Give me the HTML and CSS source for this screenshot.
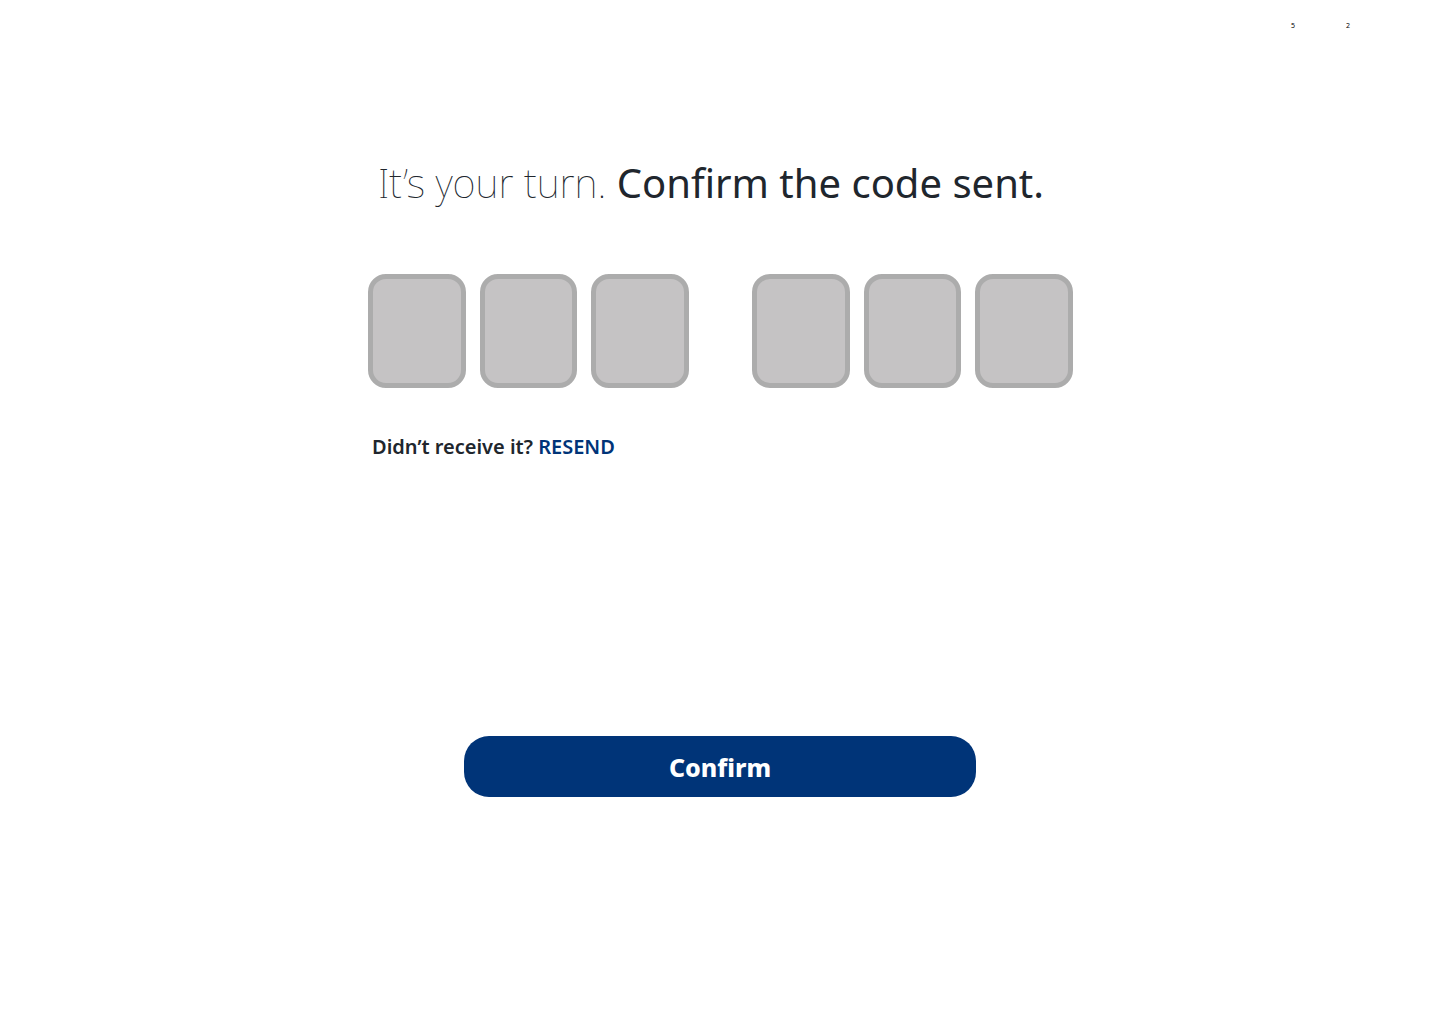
FILE: index.html
```html
<!DOCTYPE html>
<html lang="en">
<head>
<meta charset="utf-8">
<meta name="viewport" content="width=device-width, initial-scale=1">
<title>Confirm the code</title>
<link rel="stylesheet" href="styles.css">
</head>
<body>
<header class="steps"><span>5</span><span>2</span></header>
<main class="page">
<h1 class="title"><span class="title-light">It’s your turn.</span> Confirm the code sent.</h1>
<form class="form">
<div class="code">
<div class="group">
<input class="digit" type="text" inputmode="numeric" maxlength="1" aria-label="Digit 1">
<input class="digit" type="text" inputmode="numeric" maxlength="1" aria-label="Digit 2">
<input class="digit" type="text" inputmode="numeric" maxlength="1" aria-label="Digit 3">
</div>
<div class="group">
<input class="digit" type="text" inputmode="numeric" maxlength="1" aria-label="Digit 4">
<input class="digit" type="text" inputmode="numeric" maxlength="1" aria-label="Digit 5">
<input class="digit" type="text" inputmode="numeric" maxlength="1" aria-label="Digit 6">
</div>
</div>
<p class="resend">Didn’t receive it? <a class="resend-link" href="#resend">RESEND</a></p>
<button class="confirm" type="submit">Confirm</button>
</form>
</main>
</body>
</html>
```
FILE: styles.css
```css
* {
  box-sizing: border-box;
}

body {
  margin: 0;
  background: #fff;
  color: #20262d;
  font-family: "Noto Sans", sans-serif;
}

.steps {
  display: flex;
  justify-content: flex-end;
  gap: 51px;
  padding: 22px 90px 0;
  color: #000;
  font-size: 7px;
  line-height: 8px;
}

.page {
  max-width: 706px;
  margin: 0 auto;
  padding-top: 125px;
}

.title {
  margin: 0;
  padding-left: 11px;
  font-size: 40px;
  font-weight: 400;
  line-height: 56px;
}

.title-light {
  font-weight: 100;
}

.form {
  display: flex;
  flex-direction: column;
}

.code {
  display: grid;
  grid-template-columns: 1fr 1fr;
  gap: 63px;
  margin-top: 63px;
  padding-left: 1px;
}

.group {
  display: grid;
  grid-template-columns: repeat(3, 1fr);
  gap: 14px;
}

.digit {
  width: 100%;
  min-width: 0;
  height: 114px;
  padding: 0;
  border: 5px solid #acacac;
  border-radius: 18px;
  background: #c5c3c4;
  color: inherit;
  font: inherit;
  font-size: 40px;
  text-align: center;
}

.resend {
  margin: 45px 0 0;
  padding-left: 5px;
  font-size: 20px;
  font-weight: 600;
  line-height: 28px;
}

.resend-link {
  color: #003478;
  text-decoration: none;
}

.confirm {
  align-self: center;
  width: 100%;
  max-width: 512px;
  height: 61px;
  margin-top: 275px;
  padding: 0;
  border: 0;
  border-radius: 25px;
  background: #003478;
  color: #fff;
  font: inherit;
  font-size: 25px;
  font-weight: 800;
}
```
